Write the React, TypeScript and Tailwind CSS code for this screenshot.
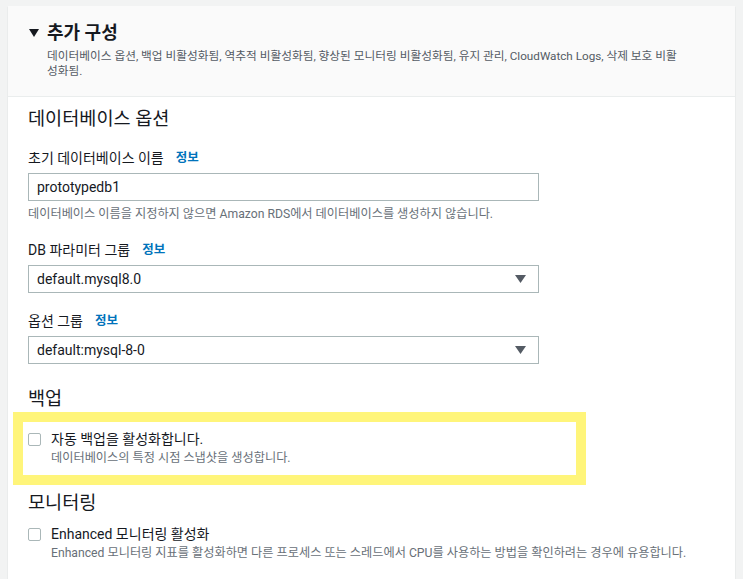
function Info() {
  return <span className="ml-[12px] text-[12.5px] font-bold text-[#0073bb]">정보</span>;
}

function Caret() {
  return (
    <svg width="11" height="8" viewBox="0 0 11 8" className="fill-[#545b64]">
      <path d="M0 0 H11 L5.5 8 Z" />
    </svg>
  );
}

function Field({ label, children }: { label: string; children: React.ReactNode }) {
  return (
    <div>
      <div className="flex h-[20px] items-center text-[14px] text-[#16191f]">
        {label}
        <Info />
      </div>
      <div className="mt-[5px]">{children}</div>
    </div>
  );
}

function Select({ value }: { value: string }) {
  return (
    <div className="flex h-[28px] w-[511px] items-center justify-between border border-[#aab7b8] bg-white pl-[8px] pr-[12px] text-[14px] text-[#16191f]">
      <span>{value}</span>
      <Caret />
    </div>
  );
}

function Check({ title, desc }: { title: string; desc: string }) {
  return (
    <div className="flex items-start gap-[10px]">
      <div className="mt-[4px] h-[13px] w-[13px] shrink-0 rounded-[2px] border border-[#aab7b8] bg-white" />
      <div>
        <div className="text-[14px] leading-[20px] text-[#16191f]">{title}</div>
        <div className="text-[12.2px] leading-[18px] text-[#687078]">{desc}</div>
      </div>
    </div>
  );
}

export default function App() {
  return (
    <div
      className="min-h-[579px] bg-[#f2f3f3] pl-[8px] pr-[8px] pt-[6px]"
      style={{ fontFamily: 'Roboto, "Noto Sans CJK KR", sans-serif' }}
    >
      <div className="min-h-[573px] bg-white shadow-[0_1px_1px_rgba(0,28,36,0.2)]">
        <div className="border-b border-[#eaeded] bg-[#fafafa] pb-[17px] pl-[21px] pr-[14px] pt-[15px]">
          <div className="flex items-center gap-[8px]">
            <svg width="10" height="8" viewBox="0 0 10 8" className="fill-[#16191f]">
              <path d="M0 0 H10 L5 8 Z" />
            </svg>
            <h2 className="text-[18px] font-bold leading-[24px] text-[#16191f]">추가 구성</h2>
          </div>
          <p className="mt-[4px] pl-[18px] text-[11.7px] leading-[15px] text-[#545b64]">
            데이터베이스 옵션, 백업 비활성화됨, 역추적 비활성화됨, 향상된 모니터링 비활성화됨, 유지 관리, CloudWatch Logs, 삭제 보호 비활
            <br />
            성화됨.
          </p>
        </div>

        <div className="px-[20px] pt-[10px]">
          <h3 className="text-[18.6px] leading-[24px] text-[#16191f]">데이터베이스 옵션</h3>

          <div className="mt-[17px]">
            <Field label="초기 데이터베이스 이름">
              <div className="flex h-[28px] w-[511px] items-center border border-[#aab7b8] bg-white pl-[8px] text-[14px] text-[#16191f]">
                prototypedb1
              </div>
            </Field>
            <div className="mt-[5px] text-[12.2px] leading-[16px] text-[#687078]">
              데이터베이스 이름을 지정하지 않으면 Amazon RDS에서 데이터베이스를 생성하지 않습니다.
            </div>
          </div>

          <div className="mt-[18px]">
            <Field label="DB 파라미터 그룹">
              <Select value="default.mysql8.0" />
            </Field>
          </div>

          <div className="mt-[18px]">
            <Field label="옵션 그룹">
              <Select value="default:mysql-8-0" />
            </Field>
          </div>

          <h3 className="mt-[23px] text-[18.6px] leading-[24px] text-[#16191f]">백업</h3>

          <div className="-ml-[15px] mt-[1px] w-[573px] border-[10px] border-[#fff57a] bg-white pb-[8px] pl-[5px] pt-[7px]">
            <Check title="자동 백업을 활성화합니다." desc="데이터베이스의 특정 시점 스냅샷을 생성합니다." />
          </div>

          <h3 className="mt-[6px] text-[18.6px] leading-[24px] text-[#16191f]">모니터링</h3>

          <div className="mt-[9px]">
            <Check
              title="Enhanced 모니터링 활성화"
              desc="Enhanced 모니터링 지표를 활성화하면 다른 프로세스 또는 스레드에서 CPU를 사용하는 방법을 확인하려는 경우에 유용합니다."
            />
          </div>
        </div>
      </div>
    </div>
  );
}
